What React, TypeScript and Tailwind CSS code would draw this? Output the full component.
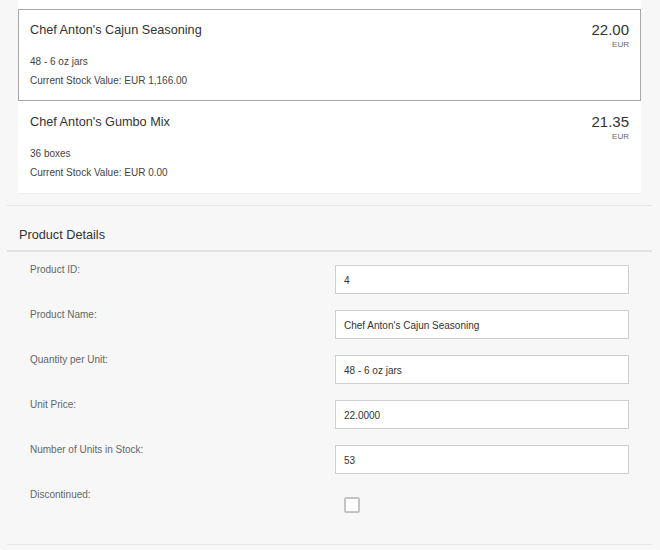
import React from "react";

type Item = { title: string; price: string; unit: string; stock: string; selected?: boolean };

const items: Item[] = [
  { title: "Chef Anton's Cajun Seasoning", price: "22.00", unit: "48 - 6 oz jars", stock: "Current Stock Value: EUR 1,166.00", selected: true },
  { title: "Chef Anton's Gumbo Mix", price: "21.35", unit: "36 boxes", stock: "Current Stock Value: EUR 0.00" },
];

const fields: { label: string; value?: string; checkbox?: boolean }[] = [
  { label: "Product ID:", value: "4" },
  { label: "Product Name:", value: "Chef Anton's Cajun Seasoning" },
  { label: "Quantity per Unit:", value: "48 - 6 oz jars" },
  { label: "Unit Price:", value: "22.0000" },
  { label: "Number of Units in Stock:", value: "53" },
  { label: "Discontinued:", checkbox: true },
];

function ListItem({ item }: { item: Item }) {
  return (
    <div
      className={
        "h-[92px] border pl-[11px] pr-[11px] pt-[12px] " +
        (item.selected ? "border-[#a7a7a7]" : "border-transparent")
      }
    >
      <div className="flex h-[30px] items-start justify-between">
        <div className="text-[12.7px] leading-[16px] text-[#333333]">{item.title}</div>
        <div className="-mt-px flex flex-col items-end">
          <div className="text-[15px] leading-[18px] text-[#333333]">{item.price}</div>
          <div className="mt-px text-[8px] leading-[10px] text-[#666666]">EUR</div>
        </div>
      </div>
      <div className="text-[10px] leading-[19px] text-[#444444]">{item.unit}</div>
      <div className="text-[10px] leading-[19px] text-[#444444]">{item.stock}</div>
    </div>
  );
}

export default function App() {
  return (
    <div
      className="h-[550px] w-[660px] overflow-hidden bg-[#f7f7f7]"
      style={{ fontFamily: '"Liberation Sans", Arial, sans-serif' }}
    >
      <div className="ml-[18px] w-[623px] border-b border-[#ececec] bg-white pt-[9px]">
        {items.map((it) => (
          <ListItem key={it.title} item={it} />
        ))}
      </div>

      <div className="ml-[7px] mt-[11px] h-px w-[645px] bg-[#e6e6e6]" />

      <div className="ml-[7px] w-[645px] border-b-2 border-[#e2e2e2] pb-[7px] pl-[12px] pt-[21px]">
        <div className="text-[12.7px] leading-[16px] text-[#333333]">Product Details</div>
      </div>

      <div className="flex flex-col gap-[14px] pb-[25px] pl-[30px] pt-[11px]">
        {fields.map((f) => (
          <div key={f.label} className="flex h-[31px]">
            <div className="w-[305px] pt-px text-[10px] leading-[12px] text-[#666666]">{f.label}</div>
            {f.checkbox ? (
              <div className="ml-[9px] mt-[9px] h-[16px] w-[16px] rounded-[2px] border-2 border-[#c4c4c4] bg-white" />
            ) : (
              <div className="mt-[2px] flex h-[29px] w-[294px] items-center border border-[#cfcfcf] bg-white pl-[8px] pt-px text-[10px] text-[#333333]">
                {f.value}
              </div>
            )}
          </div>
        ))}
      </div>

      <div className="ml-[7px] h-px w-[645px] bg-[#e6e6e6]" />
    </div>
  );
}
